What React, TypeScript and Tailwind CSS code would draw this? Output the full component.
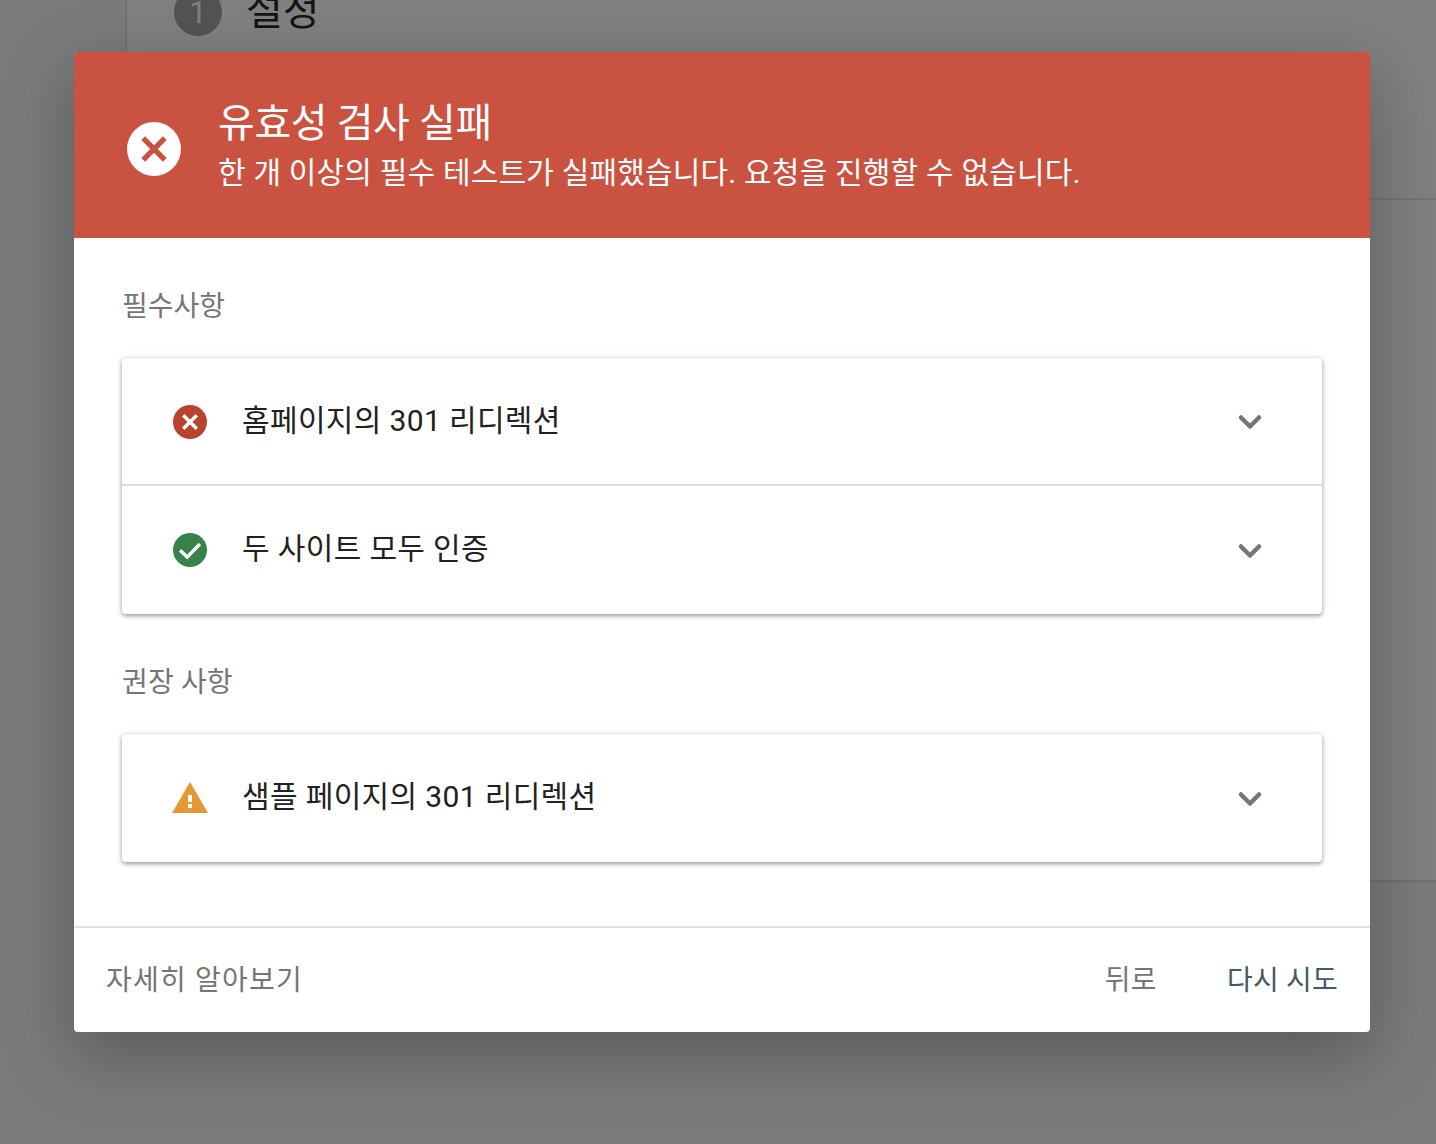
import { ChevronDown } from "lucide-react";

const font = "font-['Roboto','Noto_Sans_CJK_KR',sans-serif]";

function ErrorIcon({ className, fill, cross }: { className: string; fill: string; cross: string }) {
  return (
    <svg viewBox="0 0 24 24" className={className}>
      <circle cx="12" cy="12" r="12" fill={fill} />
      <path d="M7.2 7.2l9.6 9.6M16.8 7.2l-9.6 9.6" stroke={cross} strokeWidth="2.4" fill="none" />
    </svg>
  );
}

function CheckIcon() {
  return (
    <svg viewBox="0 0 24 24" className="w-[34px] h-[34px]">
      <circle cx="12" cy="12" r="12" fill="#39814a" />
      <path d="M5 12.2l5 4.8 9-9.2" stroke="#fff" strokeWidth="2.4" fill="none" />
    </svg>
  );
}

function WarnIcon() {
  return (
    <svg viewBox="0 0 36 32" className="w-[36px] h-[32px]">
      <path d="M18 0L36 31H0z" fill="#e49735" />
      <rect x="16" y="13" width="4" height="7" fill="#fff" />
      <rect x="16" y="22" width="4" height="4" fill="#fff" />
    </svg>
  );
}

function Row({ icon, text, divider, textClass }: { icon: React.ReactNode; text: string; divider?: boolean; textClass?: string }) {
  return (
    <div className={`flex items-center h-32 pl-[50px] pr-[50px] ${divider ? "border-b-2 border-[#dcdcdc]" : ""}`}>
      <div className="w-[36px] flex justify-center shrink-0">{icon}</div>
      <div className={`ml-[34px] flex-1 text-[30px] leading-10 tracking-[0.35px] text-[#212121] ${textClass ?? ""}`}>{text}</div>
      <ChevronDown className="w-[36px] h-[36px] text-[#757575] mr-[4px] translate-y-[1px]" strokeWidth={3} />
    </div>
  );
}

export default function App() {
  return (
    <div className={`relative h-[1144px] overflow-hidden bg-[#7a7b7d] ${font}`}>
      {/* Page behind the dialog */}
      <div className="ml-[125px] h-[882px] bg-[#808080] border-l-2 border-b-2 border-[#707070]">
        <div className="h-[200px] border-b-2 border-[#747474] pl-[47px] flex items-start">
          <div className="flex items-center gap-6 -mt-[12px]">
            <div className="w-12 h-12 rounded-full bg-[#535353] flex items-center justify-center text-[32px] text-[#808080]">1</div>
            <div className="text-[40px] leading-[48px] text-[#141414]">설정</div>
          </div>
        </div>
      </div>

      {/* Dialog */}
      <div className="absolute left-[74px] top-[52px] w-[1296px] h-[980px] flex flex-col bg-white rounded-[4px] overflow-hidden shadow-[0_22px_70px_rgba(0,0,0,0.28)]">
        <div className="h-[186px] shrink-0 bg-[#ca5240] flex items-center pl-[53px] text-white">
          <ErrorIcon className="w-[54px] h-[54px] translate-y-[4px]" fill="#fff" cross="#ca5240" />
          <div className="ml-[37px] mt-[7px]">
            <div className="text-[40px] leading-[48px] tracking-[-0.4px] -mt-[4px]">유효성 검사 실패</div>
            <div className="text-[30px] leading-10 tracking-[0.18px] mt-[5px]">한 개 이상의 필수 테스트가 실패했습니다. 요청을 진행할 수 없습니다.</div>
          </div>
        </div>

        <div className="flex-1 px-12 pt-[49px]">
          <div className="text-[28px] leading-10 text-[#757575]">필수사항</div>
          <div className="mt-[31px] rounded-[4px] bg-white shadow-[0_2px_4px_rgba(0,0,0,0.35),0_0_8px_rgba(0,0,0,0.1)]">
            <Row
              icon={<ErrorIcon className="w-[34px] h-[34px] translate-y-[1px]" fill="#b8432f" cross="#fff" />}
              text="홈페이지의 301 리디렉션"
              divider
            />
            <Row icon={<CheckIcon />} text="두 사이트 모두 인증" textClass="-translate-y-[1px]" />
          </div>
          <div className="mt-[49px] text-[28px] leading-10 tracking-[0.15px] text-[#757575]">권장 사항</div>
          <div className="mt-[31px] rounded-[4px] bg-white shadow-[0_2px_4px_rgba(0,0,0,0.35),0_0_8px_rgba(0,0,0,0.1)]">
            <Row icon={<WarnIcon />} text="샘플 페이지의 301 리디렉션" textClass="-translate-y-[1px]" />
          </div>
        </div>

        <div className="h-[106px] shrink-0 border-t-2 border-[#e4e4e4] flex items-center pl-8 pr-8 text-[28px] pt-[1px]">
          <span className="text-[#757575] flex-1 tracking-[1.2px]">자세히 알아보기</span>
          <span className="text-[#757575] tracking-[0.4px]">뒤로</span>
          <span className="ml-[70px] text-[#455a64] tracking-[0.2px]">다시 시도</span>
        </div>
      </div>
    </div>
  );
}
